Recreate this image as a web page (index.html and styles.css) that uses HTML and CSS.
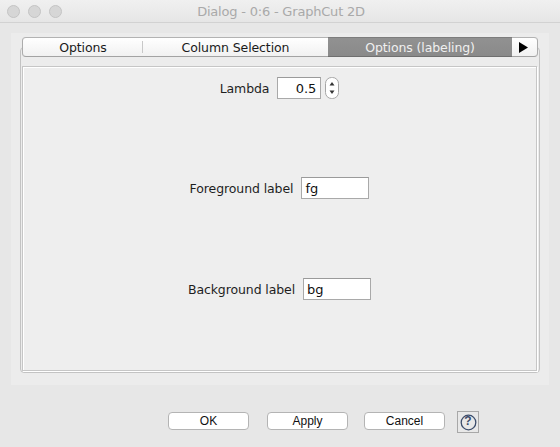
FILE: index.html
```html
<!DOCTYPE html>
<html>
<head>
<meta charset="utf-8">
<link rel="stylesheet" href="styles.css">
</head>
<body>
<div class="window">
  <div class="titlebar">
    <div class="lights">
      <span class="light"></span><span class="light"></span><span class="light"></span>
    </div>
    <div class="title">Dialog - 0:6 - GraphCut 2D</div>
  </div>
  <div class="main">
    <div class="panel">
      <div class="tabs">
        <div class="tab tab-first">Options</div>
        <div class="tab tab-mid">Column Selection</div>
        <div class="tab tab-sel">Options (labeling)</div>
        <div class="tab tab-arrow">
          <svg width="10" height="11" viewBox="0 0 10 11"><polygon points="1,0 10,5.5 1,11" fill="#000"/></svg>
        </div>
      </div>
      <div class="frame">
        <div class="inner">
          <div class="row row-lambda">
            <span class="label">Lambda</span>
            <span class="field field-num">0.5</span>
            <span class="spinner">
              <svg width="14" height="22" viewBox="0 0 14 22">
                <rect x="0.5" y="0.5" width="13" height="21" rx="6" ry="6" fill="#fff" stroke="#a6a6a6"/>
                <polygon points="7,5 9.5,8.5 4.5,8.5" fill="#333"/>
                <polygon points="7,17 9.5,13.5 4.5,13.5" fill="#333"/>
              </svg>
            </span>
          </div>
          <div class="row row-fg">
            <span class="label">Foreground label</span>
            <span class="field field-text">fg</span>
          </div>
          <div class="row row-bg">
            <span class="label">Background label</span>
            <span class="field field-text">bg</span>
          </div>
        </div>
      </div>
    </div>
    <div class="buttons">
      <div class="btn btn-ok">OK</div>
      <div class="btn btn-apply">Apply</div>
      <div class="btn btn-cancel">Cancel</div>
      <div class="help">
        <svg width="17" height="17" viewBox="0 0 17 17"><circle cx="8.5" cy="8.5" r="7.3" fill="none" stroke="#3b4c6b" stroke-width="1.3"/></svg>
        <span class="help-q">?</span>
      </div>
    </div>
  </div>
</div>
</body>
</html>
```

FILE: styles.css
```css
html, body {
  margin: 0;
  padding: 0;
}
body {
  width: 560px;
  height: 447px;
  overflow: hidden;
  background: #e7e7e7;
  font-family: "DejaVu Sans", sans-serif;
}
.window {
  width: 560px;
  height: 447px;
}
.titlebar {
  height: 22px;
  border-bottom: 1px solid #d2d2d2;
  background: linear-gradient(#f0f0f0, #e6e6e6);
  display: flex;
  align-items: center;
  position: relative;
}
.lights {
  display: flex;
  gap: 8px;
  padding-left: 7px;
}
.light {
  width: 11px;
  height: 11px;
  border-radius: 50%;
  background: #d6d6d6;
  border: 0.5px solid #c4c4c4;
}
.title {
  flex: 1;
  text-align: center;
  margin-right: 60px;
  font-size: 13px;
  color: #a9a9a9;
  font-family: "DejaVu Sans", sans-serif;
  letter-spacing: -0.2px;
}
.main {
  padding: 10px 11px 0 11px;
}
.panel {
  height: 352px;
  background: #ececec;
  padding: 4px 0 0 0;
  box-sizing: border-box;
}
.tabs {
  display: flex;
  margin-left: 11px;
  height: 20px;
  position: relative;
  z-index: 1;
}
.tab {
  box-sizing: border-box;
  height: 20px;
  display: flex;
  align-items: center;
  justify-content: center;
  font-size: 12.5px;
  color: #1a1a1a;
  background: linear-gradient(#ffffff, #f1f1f1);
  border-top: 1px solid #b3b3b3;
  border-bottom: 1px solid #a3a3a3;
  letter-spacing: -0.1px;
}
.tab-first {
  width: 121px;
  border-left: 1px solid #acacac;
  border-radius: 4px 0 0 4px;
  position: relative;
}
.tab-first::after {
  content: "";
  position: absolute;
  right: 0;
  top: 3px;
  bottom: 3px;
  width: 1px;
  background: #c8c8c8;
}
.tab-mid {
  width: 185px;
}
.tab-sel {
  width: 184px;
  background: linear-gradient(#919191, #8a8a8a);
  color: #f0f0f0;
  border-top-color: #7d7d7d;
  border-bottom-color: #6f6f6f;
}
.tab-arrow {
  width: 26px;
  border-right: 1px solid #acacac;
  border-radius: 0 4px 4px 0;
  padding-right: 3px;
}
.frame {
  margin: -10px 9px 0 9px;
  height: 326px;
  box-sizing: border-box;
  border: 1px solid #c3c3c3;
  border-radius: 4px;
  padding: 18px 2px 1px 1px;
}
.inner {
  height: 100%;
  box-sizing: border-box;
  border: 1px solid #c6c6c6;
  box-shadow: 1px 1px 0 #ffffff, inset 1px 1px 0 #ffffff;
  background: #eeeeee;
  display: flex;
  flex-direction: column;
  align-items: center;
  padding-top: 10px;
}
.row {
  display: flex;
  align-items: center;
  height: 22px;
}
.row-fg {
  margin-top: 78px;
}
.row-bg {
  margin-top: 79px;
}
.label {
  font-size: 12.5px;
  color: #1e1e1e;
  margin-right: 8px;
  letter-spacing: -0.1px;
}
.field {
  box-sizing: border-box;
  height: 22px;
  background: #fff;
  border: 1px solid #a9a9a9;
  border-top-color: #9a9a9a;
  font-size: 13px;
  color: #111;
  display: flex;
  align-items: center;
}
.field-num {
  width: 44px;
  justify-content: flex-end;
  padding-right: 4px;
}
.field-text {
  width: 68px;
  padding-left: 3px;
}
.spinner {
  margin-left: 4px;
  display: flex;
}
.buttons {
  display: flex;
  align-items: flex-start;
  padding-left: 157px;
  margin-top: 26px;
}
.btn {
  box-sizing: border-box;
  width: 81px;
  height: 18px;
  margin-top: 1px;
  background: #ffffff;
  border: 1px solid #b4b4b4;
  border-radius: 4px;
  font-family: "Liberation Sans", sans-serif;
  font-size: 12px;
  color: #111;
  display: flex;
  align-items: center;
  justify-content: center;
}
.btn-apply {
  margin-left: 18px;
}
.btn-cancel {
  margin-left: 16px;
}
.help {
  margin-left: 12px;
  box-sizing: border-box;
  width: 22px;
  height: 22px;
  border: 1px solid #a8a8a8;
  background: #e8e8e8;
  display: flex;
  align-items: center;
  justify-content: center;
  position: relative;
}
.help-q {
  position: absolute;
  left: 0;
  right: 0;
  top: 2px;
  text-align: center;
  font-family: "Liberation Sans", sans-serif;
  font-weight: bold;
  font-size: 12px;
  color: #3b4c6b;
}
```
